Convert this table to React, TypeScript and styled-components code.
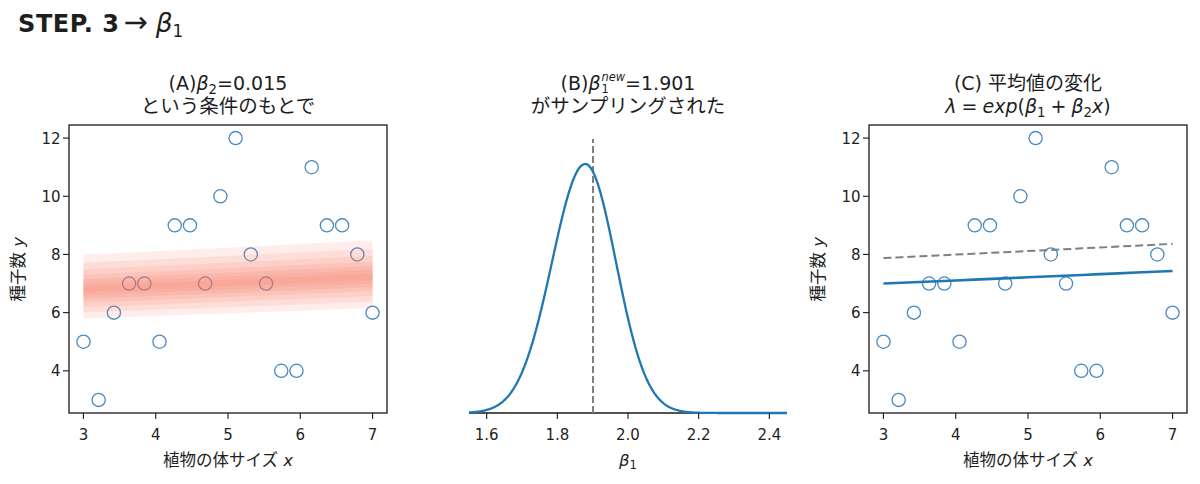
import React from "react";
import styled, { createGlobalStyle } from "styled-components";

const GlobalStyle = createGlobalStyle`
  html, body { margin: 0; padding: 0; background: #ffffff; }
  body {
    font-family: "DejaVu Sans", "Noto Sans CJK JP", sans-serif;
    color: #1e1e1e;
  }
`;

/* ---------- geometry ---------- */
const AX = 35; // axes left inside svg
const W = 318; // axes width
const H = 288; // axes height
const SVG_W = 366;
const SVG_H = 320;

const XS = Array.from({ length: 20 }, (_, i) => 3 + (4 * i) / 19);
const YS = [5, 3, 6, 7, 7, 5, 9, 9, 7, 10, 12, 8, 7, 4, 4, 11, 9, 9, 8, 6];

const sx = (x: number) => AX + ((x - 2.8) / 4.4) * W;
const sy = (v: number) => ((12.45 - v) / 9.9) * H;
const bx = (x: number) => AX + ((x - 1.55) / 0.9) * W;

const lam = (b1: number, x: number) => Math.exp(b1 + 0.015 * x);

/* ---------- styled parts ---------- */
const Page = styled.div`
  width: 1200px;
  height: 484px;
  overflow: hidden;
  display: flex;
  flex-direction: column;
`;

const Heading = styled.h2`
  margin: 0;
  padding: 9px 0 0 18px;
  height: 28px;
  font-size: 24px;
  line-height: 28px;
  font-weight: 700;
  letter-spacing: 0.6px;
  white-space: nowrap;
`;

const Arrow = styled.span`
  font-weight: 400;
  font-size: 1.2em;
  line-height: 0;
  margin: 0 8px 0 4px;
  letter-spacing: 0;
`;

const HeadVar = styled.i`
  font-style: italic;
  font-weight: 400;
  font-size: 1.1em;
  letter-spacing: 0;
`;

const MathVar = styled.i`
  font-style: italic;
  font-weight: 400;
  letter-spacing: 0;
`;

const Sub = styled.sub`
  font-size: 0.7em;
  font-style: normal;
  font-weight: 400;
  vertical-align: -0.3em;
  line-height: 0;
  letter-spacing: 0;
`;

const Scripts = styled.span`
  display: inline-flex;
  flex-direction: column;
  align-items: flex-start;
  font-size: 0.6em;
  line-height: 1.05;
  vertical-align: 9px;
  margin-left: 1px;
`;

const Sup = styled.i`
  font-style: italic;
`;

const Space = styled.span<{ $w: number }>`
  display: inline-block;
  width: ${(p) => p.$w}px;
`;

const PanelRow = styled.div`
  display: flex;
  padding-top: 35px;
`;

const Panel = styled.section`
  width: 400px;
  display: flex;
  flex-direction: column;
`;

const Title = styled.div`
  margin-left: 69px;
  width: 318px;
  padding-bottom: 7px;
  text-align: center;
  display: flex;
  flex-direction: column;
  align-items: center;
`;

const TitleLine = styled.div<{ $size: number }>`
  height: 23px;
  font-size: ${(p) => p.$size}px;
  line-height: 23px;
  white-space: nowrap;
`;

const PlotRow = styled.div`
  display: flex;
  align-items: flex-start;
`;

const YLabelCell = styled.div`
  width: 34px;
  height: ${H}px;
  display: flex;
  align-items: center;
  justify-content: center;
`;

const YLabel = styled.span`
  writing-mode: vertical-rl;
  text-orientation: sideways;
  transform: rotate(180deg);
  font-size: 16.5px;
  white-space: nowrap;
`;

const PlotSvg = styled.svg`
  display: block;
  overflow: visible;
`;

const XLabel = styled.div`
  margin-left: 69px;
  margin-top: 5px;
  width: 318px;
  text-align: center;
  font-size: 16.5px;
  line-height: 22px;
  white-space: nowrap;
`;

const TickText = styled.text`
  font-family: "DejaVu Sans", sans-serif;
  font-size: 15px;
  fill: #1e1e1e;
`;

/* ---------- chart pieces ---------- */
const CIRCLE = "#4a8ac2";
const BLUE = "#1f77b4";
const GRAY = "#7f7f7f";

function ScatterAxes({ children }: { children?: React.ReactNode }) {
  const xt = [3, 4, 5, 6, 7];
  const yt = [4, 6, 8, 10, 12];
  return (
    <PlotSvg width={SVG_W} height={SVG_H} viewBox={`0 0 ${SVG_W} ${SVG_H}`}>
      {XS.map((x, i) => (
        <circle key={i} cx={sx(x)} cy={sy(YS[i])} r={6.6} fill="none" stroke={CIRCLE} strokeWidth={1.3} />
      ))}
      {children}
      <rect x={AX} y={0} width={W} height={H} fill="none" stroke="#1a1a1a" strokeWidth={1.3} />
      {xt.map((t) => (
        <g key={t}>
          <line x1={sx(t)} x2={sx(t)} y1={H} y2={H + 6} stroke="#1a1a1a" strokeWidth={1.1} />
          <TickText x={sx(t)} y={314.5} textAnchor="middle">
            {t}
          </TickText>
        </g>
      ))}
      {yt.map((t) => (
        <g key={t}>
          <line x1={AX - 6} x2={AX} y1={sy(t)} y2={sy(t)} stroke="#1a1a1a" strokeWidth={1.1} />
          <TickText x={AX - 8.5} y={sy(t) + 5.5} textAnchor="end">
            {t}
          </TickText>
        </g>
      ))}
    </PlotSvg>
  );
}

function bandPoints(center: number, d: number) {
  const xs = [3, 3.5, 4, 4.5, 5, 5.5, 6, 6.5, 7];
  const top = xs.map((x) => `${sx(x).toFixed(2)},${sy(lam(center + d, x)).toFixed(2)}`);
  const bot = xs
    .slice()
    .reverse()
    .map((x) => `${sx(x).toFixed(2)},${sy(lam(center - d, x)).toFixed(2)}`);
  return [...top, ...bot].join(" ");
}

const BAND_OFFSETS = [0.16, 0.125, 0.095, 0.07, 0.05, 0.032, 0.016];

function PanelA() {
  return (
    <ScatterAxes>
      {BAND_OFFSETS.map((d) => (
        <polygon key={d} points={bandPoints(1.873, d)} fill="#f7735f" fillOpacity={0.13} />
      ))}
    </ScatterAxes>
  );
}

function linePath(b1: number) {
  const pts: string[] = [];
  for (let x = 3; x <= 7.0001; x += 0.25) {
    pts.push(`${sx(x).toFixed(2)},${sy(lam(b1, x)).toFixed(2)}`);
  }
  return "M" + pts.join(" L");
}

function PanelC() {
  return (
    <ScatterAxes>
      <path d={linePath(2.019)} fill="none" stroke={GRAY} strokeWidth={2} strokeDasharray="8 4" />
      <path d={linePath(1.901)} fill="none" stroke={BLUE} strokeWidth={2.6} />
    </ScatterAxes>
  );
}

function densityPath() {
  const pts: string[] = [];
  for (let i = 0; i <= 360; i++) {
    const x = 1.55 + (0.9 * i) / 360;
    const s = x < 1.879 ? 0.094 : 0.087;
    const y = H - 249 * Math.exp(-((x - 1.879) ** 2) / (2 * s * s));
    pts.push(`${bx(x).toFixed(2)},${y.toFixed(2)}`);
  }
  return "M" + pts.join(" L");
}

function PanelB() {
  const xt = [1.6, 1.8, 2.0, 2.2, 2.4];
  return (
    <PlotSvg width={SVG_W} height={SVG_H} viewBox={`0 0 ${SVG_W} ${SVG_H}`}>
      <line x1={AX} x2={AX + W} y1={H} y2={H} stroke="#1a1a1a" strokeWidth={1.3} />
      <line x1={bx(1.901)} x2={bx(1.901)} y1={H} y2={14} stroke={GRAY} strokeWidth={2} strokeDasharray="7 3" />
      <path d={densityPath()} fill="none" stroke={BLUE} strokeWidth={2.3} />
      {xt.map((t) => (
        <g key={t}>
          <line x1={bx(t)} x2={bx(t)} y1={H} y2={H + 6} stroke="#1a1a1a" strokeWidth={1.1} />
          <TickText x={bx(t)} y={314.5} textAnchor="middle">
            {t.toFixed(1)}
          </TickText>
        </g>
      ))}
    </PlotSvg>
  );
}

export default function App() {
  return (
    <Page>
      <GlobalStyle />
      <Heading>
        STEP. 3<Arrow>→</Arrow>
        <HeadVar>β</HeadVar>
        <Sub>1</Sub>
      </Heading>
      <PanelRow>
        <Panel>
          <Title>
            <TitleLine $size={19}>
              (A)<MathVar>β</MathVar>
              <Sub>2</Sub>=0.015
            </TitleLine>
            <TitleLine $size={19.5}>という条件のもとで</TitleLine>
          </Title>
          <PlotRow>
            <YLabelCell>
              <YLabel>
                種子数 <MathVar>y</MathVar>
              </YLabel>
            </YLabelCell>
            <PanelA />
          </PlotRow>
          <XLabel>
            植物の体サイズ <MathVar>x</MathVar>
          </XLabel>
        </Panel>

        <Panel>
          <Title>
            <TitleLine $size={19}>
              (B)<MathVar>β</MathVar>
              <Scripts>
                <Sup>new</Sup>
                <span>1</span>
              </Scripts>
              =1.901
            </TitleLine>
            <TitleLine $size={19.5}>がサンプリングされた</TitleLine>
          </Title>
          <PlotRow>
            <YLabelCell />
            <PanelB />
          </PlotRow>
          <XLabel>
            <MathVar>β</MathVar>
            <Sub>1</Sub>
          </XLabel>
        </Panel>

        <Panel>
          <Title>
            <TitleLine $size={19}>(C) 平均値の変化</TitleLine>
            <TitleLine $size={19}>
              <MathVar>λ</MathVar>
              <Space $w={5} />=<Space $w={5} />
              <MathVar>exp</MathVar>(<MathVar>β</MathVar>
              <Sub>1</Sub>
              <Space $w={5} />+<Space $w={5} />
              <MathVar>β</MathVar>
              <Sub>2</Sub>
              <MathVar>x</MathVar>)
            </TitleLine>
          </Title>
          <PlotRow>
            <YLabelCell>
              <YLabel>
                種子数 <MathVar>y</MathVar>
              </YLabel>
            </YLabelCell>
            <PanelC />
          </PlotRow>
          <XLabel>
            植物の体サイズ <MathVar>x</MathVar>
          </XLabel>
        </Panel>
      </PanelRow>
    </Page>
  );
}
